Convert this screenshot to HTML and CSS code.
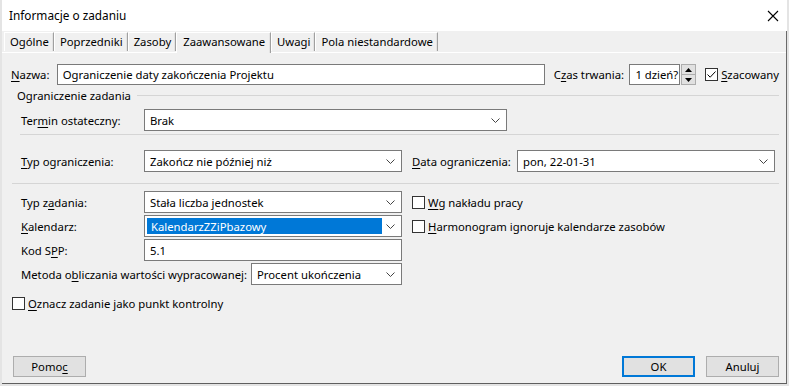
FILE: index.html
```html
<!DOCTYPE html>
<html lang="pl">
<head>
<meta charset="utf-8">
<title>Informacje o zadaniu</title>
<link rel="stylesheet" href="styles.css">
</head>
<body>
<div class="dialog">
  <div class="titlebar">
    <span class="title">Informacje o zadaniu</span>
    <svg class="close" width="12" height="12" viewBox="0 0 12 12"><path d="M1 1L11 11M11 1L1 11" stroke="#000" stroke-width="1.1" fill="none"/></svg>
  </div>
  <div class="main">
    <div class="tabs">
      <div class="tab">Ogólne</div>
      <div class="tab">Poprzedniki</div>
      <div class="tab">Zasoby</div>
      <div class="tab active">Zaawansowane</div>
      <div class="tab">Uwagi</div>
      <div class="tab">Pola niestandardowe</div>
    </div>
    <div class="panel">
      <div class="row top-row">
        <label class="lbl-name"><u>N</u>azwa:</label>
        <div class="field name-field">Ograniczenie daty zakończenia Projektu</div>
        <label class="lbl-dur">C<u>z</u>as trwania:</label>
        <div class="field dur-field">1 dzień?</div>
        <div class="spin">
          <div class="spin-btn"><svg width="7" height="4" viewBox="0 0 7 4"><path d="M0 4L3.5 0L7 4Z" fill="#000"/></svg></div>
          <div class="spin-btn"><svg width="7" height="4" viewBox="0 0 7 4"><path d="M0 0L3.5 4L7 0Z" fill="#000"/></svg></div>
        </div>
        <div class="check est">
          <span class="box"><svg width="11" height="11" viewBox="0 0 11 11"><path d="M1.5 5.5L4.2 8.2L9.5 2.5" stroke="#000" stroke-width="1" fill="none"/></svg></span>
          <span><u>S</u>zacowany</span>
        </div>
      </div>

      <div class="group-head"><span>Ograniczenie zadania</span><span class="line"></span></div>

      <div class="row deadline-row">
        <label class="lbl-col">Ter<u>m</u>in ostateczny:</label>
        <div class="field select wide"><span>Brak</span><svg class="chev" width="9" height="5" viewBox="0 0 9 5"><path d="M0.5 0.5L4.5 4.5L8.5 0.5" stroke="#444" fill="none"/></svg></div>
      </div>
      <div class="sep sep-inner"></div>

      <div class="row constraint-row">
        <label class="lbl-col"><u>T</u>yp ograniczenia:</label>
        <div class="field select mid"><span>Zakończ nie później niż</span><svg class="chev" width="9" height="5" viewBox="0 0 9 5"><path d="M0.5 0.5L4.5 4.5L8.5 0.5" stroke="#444" fill="none"/></svg></div>
        <label class="lbl-date"><u>D</u>ata ograniczenia:</label>
        <div class="field select mid"><span>pon, 22-01-31</span><svg class="chev" width="9" height="5" viewBox="0 0 9 5"><path d="M0.5 0.5L4.5 4.5L8.5 0.5" stroke="#444" fill="none"/></svg></div>
      </div>
      <div class="sep sep-outer"></div>

      <div class="lower">
        <div class="row">
          <label class="lbl-col">Typ z<u>a</u>dania:</label>
          <div class="field select mid"><span>Stała liczba jednostek</span><svg class="chev" width="9" height="5" viewBox="0 0 9 5"><path d="M0.5 0.5L4.5 4.5L8.5 0.5" stroke="#444" fill="none"/></svg></div>
          <div class="check side"><span class="box"></span><span><u>W</u>g nakładu pracy</span></div>
        </div>
        <div class="row">
          <label class="lbl-col"><u>K</u>alendarz:</label>
          <div class="field select mid sel-field"><span class="selected">KalendarzZZiPbazowy</span><svg class="chev" width="9" height="5" viewBox="0 0 9 5"><path d="M0.5 0.5L4.5 4.5L8.5 0.5" stroke="#444" fill="none"/></svg></div>
          <div class="check side"><span class="box"></span><span><u>H</u>armonogram ignoruje kalendarze zasobów</span></div>
        </div>
        <div class="row">
          <label class="lbl-col">Kod S<u>P</u>P:</label>
          <div class="field mid">5.1</div>
        </div>
        <div class="row">
          <label class="lbl-ev">Metoda o<u>b</u>liczania wartości wypracowanej:</label>
          <div class="field select small"><span>Procent ukończenia</span><svg class="chev" width="9" height="5" viewBox="0 0 9 5"><path d="M0.5 0.5L4.5 4.5L8.5 0.5" stroke="#444" fill="none"/></svg></div>
        </div>
      </div>

      <div class="check milestone"><span class="box"></span><span><u>O</u>znacz zadanie jako punkt kontrolny</span></div>

      <div class="footer">
        <button class="btn">Pomo<u>c</u></button>
        <div class="right-btns">
          <button class="btn default">OK</button>
          <button class="btn">Anuluj</button>
        </div>
      </div>
    </div>
  </div>
</div>
</body>
</html>
```

FILE: styles.css
```css
* { box-sizing: border-box; }
html, body { margin: 0; padding: 0; }
body {
  width: 789px;
  height: 386px;
  overflow: hidden;
  background: #e4e4e4;
  font-family: "Noto Sans", "Segoe UI", sans-serif;
  font-size: 11.3px;
  color: #000;
}
label { white-space: nowrap; }
u { text-decoration: underline; text-underline-offset: 2px; }

.dialog {
  margin-left: 2px;
  width: 785px;
  height: 384px;
  background: #f0f0f0;
  border-bottom: 1px solid #5f5f5f;
  display: flex;
  flex-direction: column;
}

.titlebar {
  height: 31px;
  flex: none;
  background: #fff;
  display: flex;
  align-items: center;
  justify-content: space-between;
  padding: 0 8px 0 7px;
  font-size: 11.8px;
}
.title { padding-bottom: 1px; }

.main {
  flex: 1;
  display: flex;
  flex-direction: column;
  border-right: 1px solid #6a6a6a;
}

.tabs {
  height: 21px;
  flex: none;
  display: flex;
  align-items: flex-end;
  padding-left: 2px;
  position: relative;
  z-index: 1;
}
.tab {
  height: 19px;
  margin-bottom: 1px;
  padding: 0 4px 0 5px;
  display: flex;
  align-items: center;
  background: #f0f0f0;
  border-top: 1px solid #fff;
  border-left: 1px solid #fff;
  border-right: 1px solid #a0a0a0;
  box-shadow: inset -1px 0 0 #e3e3e3;
  line-height: 1;
}
.tab.active {
  height: 21px;
  margin-bottom: -1px;
  padding: 0 5px 2px 6px;
}

.panel {
  flex: 1;
  display: flex;
  flex-direction: column;
  border-top: 1px solid #fff;
  padding: 11px 7px 0 9px;
}

.row {
  display: flex;
  align-items: center;
  height: 22px;
}

.field {
  height: 22px;
  background: #fff;
  border: 1px solid #7a7a7a;
  display: flex;
  align-items: center;
  padding-left: 5px;
  white-space: nowrap;
}

.top-row { height: 21px; }
.top-row .field { height: 21px; }
.lbl-name { width: 46px; }
.name-field { width: 490px; }
.lbl-dur { width: 76px; margin-left: 9px; }
.dur-field { width: 51px; }

.spin {
  width: 15px;
  height: 21px;
  margin-left: 1px;
  display: flex;
  flex-direction: column;
}
.spin-btn {
  flex: 1;
  background: #e1e1e1;
  border: 1px solid #adadad;
  display: flex;
  align-items: center;
  justify-content: center;
}
.spin-btn + .spin-btn { border-top: none; }

.check {
  display: flex;
  align-items: center;
  white-space: nowrap;
}
.box {
  width: 13px;
  height: 13px;
  border: 1px solid #333;
  background: #fff;
  margin-right: 3px;
  display: flex;
  align-items: center;
  justify-content: center;
}
.est { margin-left: 9px; }

.group-head {
  display: flex;
  align-items: center;
  height: 14px;
  margin-top: 3px;
  padding-left: 6px;
}
.group-head .line {
  flex: 1;
  height: 1px;
  background: #d5d5d5;
  margin-left: 6px;
}

.deadline-row { margin-top: 7px; padding-left: 10px; }
.lbl-col { width: 123px; flex: none; }
.wide { width: 363px; }
.mid { width: 258px; }
.small { width: 151px; }

.select {
  justify-content: space-between;
  padding-right: 6px;
}
.chev { flex: none; }

.sep { height: 1px; background: #d5d5d5; }
.sep-inner { margin: 3px 0 0 9px; }
.constraint-row { margin-top: 15px; padding-left: 10px; }
.lbl-date { margin-left: 10px; width: 105px; }
.sep-outer { margin: 11px 0 0 1px; }

.lower {
  margin-top: 7px;
  padding-left: 10px;
  display: flex;
  flex-direction: column;
  gap: 2px;
}
.side { margin-left: 10px; }
.sel-field { padding-left: 2px; }
.selected {
  background: #0078d7;
  color: #fff;
  padding: 0 4px;
  width: 235px;
  height: 16px;
  display: flex;
  align-items: center;
}
.lbl-ev { width: 230px; flex: none; }

.milestone { margin-top: 11px; padding-left: 1px; }

.footer {
  margin-top: auto;
  margin-bottom: 6px;
  display: flex;
  justify-content: space-between;
  padding-left: 2px;
}
.right-btns { display: flex; gap: 11px; }
.btn {
  width: 73px;
  height: 21px;
  background: #e1e1e1;
  border: 1px solid #adadad;
  font: inherit;
  color: #000;
  padding: 0;
}
.btn.default { border: 2px solid #0078d7; }
```
